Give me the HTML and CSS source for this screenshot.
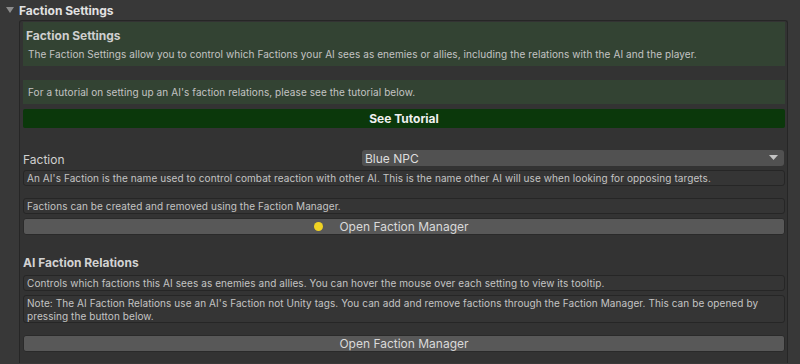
FILE: index.html
```html
<!DOCTYPE html>
<html lang="en">
<head>
  <meta charset="UTF-8" />
  <title>Faction Settings</title>
  <link rel="stylesheet" href="styles.css">
</head>
<body>
  <div class="foldout">
    <svg class="arrow" width="10" height="8" viewBox="0 0 10 8"><polygon points="1,1 9,1 5,7" fill="#8c8c8c"/></svg>
    <span>Faction Settings</span>
  </div>

  <div class="panel">
    <div class="green-box intro">
      <div class="green-title">Faction Settings</div>
      <div class="green-text">The Faction Settings allow you to control which Factions your AI sees as enemies or allies, including the relations with the AI and the player.</div>
    </div>

    <div class="green-box tutorial">
      <div class="green-text">For a tutorial on setting up an AI's faction relations, please see the tutorial below.</div>
    </div>
    <div class="tutorial-btn">See Tutorial</div>

    <div class="field-row">
      <span class="label">Faction</span>
      <div class="dropdown">
        <span>Blue NPC</span>
        <svg width="9" height="6" viewBox="0 0 9 6"><polygon points="0,0 9,0 4.5,5" fill="#c4c4c4"/></svg>
      </div>
    </div>
    <div class="helpbox first">An AI's Faction is the name used to control combat reaction with other AI. This is the name other AI will use when looking for opposing targets.</div>

    <div class="helpbox spaced">Factions can be created and removed using the Faction Manager.</div>
    <div class="button">
      <span class="dot"></span>
      Open Faction Manager
    </div>

    <div class="section-title">AI Faction Relations</div>
    <div class="helpbox">Controls which factions this AI sees as enemies and allies. You can hover the mouse over each setting to view its tooltip.</div>
    <div class="helpbox tall">Note: The AI Faction Relations use an AI's Faction not Unity tags. You can add and remove factions through the Faction Manager. This can be opened by pressing the button below.</div>
    <div class="button last">Open Faction Manager</div>
  </div>
</body>
</html>
```

FILE: styles.css
```css
body {
  margin: 0;
  background: #383838;
  font-family: Inter, "Noto Sans", sans-serif;
  color: #c4c4c4;
  height: 364px;
  overflow: hidden;
}
.foldout {
  height: 20px;
  display: flex;
  align-items: center;
  padding-left: 5px;
  font-size: 12px;
  font-weight: 700;
  color: #e2e2e2;
}
.arrow {
  margin-right: 4px;
}
.panel {
  margin-left: 19px;
  width: 762px;
  height: 341px;
  background: #333333;
  border: 1px solid #262626;
  border-bottom: none;
  border-radius: 3px 3px 0 0;
  padding: 1px 2px 0 3px;
}
.green-box {
  background: #334333;
  padding: 0 5px;
}
.intro {
  height: 44px;
  padding-top: 5px;
  box-sizing: border-box;
}
.green-title {
  font-size: 12px;
  font-weight: 700;
  color: #cfcfcf;
  height: 17px;
  line-height: 17px;
  margin-left: -2px;
}
.green-text {
  font-size: 10px;
  line-height: 15px;
  letter-spacing: 0.08px;
}
.intro .green-text {
  margin-top: 3px;
}
.tutorial {
  margin-top: 14px;
  height: 24px;
  display: flex;
  align-items: center;
}
.tutorial-btn {
  margin-top: 5px;
  height: 19px;
  background: #0b380b;
  border-radius: 2px;
  color: #f0f0f0;
  font-size: 12px;
  font-weight: 700;
  display: flex;
  align-items: center;
  justify-content: center;
}
.field-row {
  margin-top: 22px;
  height: 16px;
  display: flex;
  align-items: center;
}
.label {
  width: 339px;
  font-size: 12px;
  color: #d0d0d0;
  padding-top: 2px;
}
.dropdown {
  flex: 1;
  height: 16px;
  background: #515151;
  border-radius: 3px;
  display: flex;
  align-items: center;
  justify-content: space-between;
  padding: 0 6px 0 3px;
  margin-right: 1px;
  font-size: 12px;
  color: #dedede;
}
.helpbox {
  margin-top: 4px;
  height: 16px;
  box-sizing: border-box;
  border: 1px solid #262626;
  border-radius: 3px;
  background: #353535;
  padding: 0 3px;
  font-size: 10px;
  line-height: 13px;
  letter-spacing: 0.08px;
  display: flex;
  align-items: center;
}
.helpbox.spaced {
  margin-top: 12px;
}
.helpbox.tall {
  height: 28px;
  align-items: flex-start;
  padding-top: 1px;
}
.button {
  margin-top: 4px;
  height: 17px;
  background: #585858;
  border: 1px solid #2a2a2a;
  border-radius: 3px;
  box-sizing: border-box;
  font-size: 12px;
  color: #dadada;
  display: flex;
  align-items: center;
  justify-content: center;
}
.button.last {
  margin-top: 12px;
}
.dot {
  width: 9px;
  height: 9px;
  border-radius: 50%;
  background: #f0d323;
  margin-left: -25px;
  margin-right: 16px;
}
.section-title {
  margin-top: 20px;
  height: 16px;
  line-height: 16px;
  font-size: 12px;
  font-weight: 700;
  color: #d2d2d2;
}
```
